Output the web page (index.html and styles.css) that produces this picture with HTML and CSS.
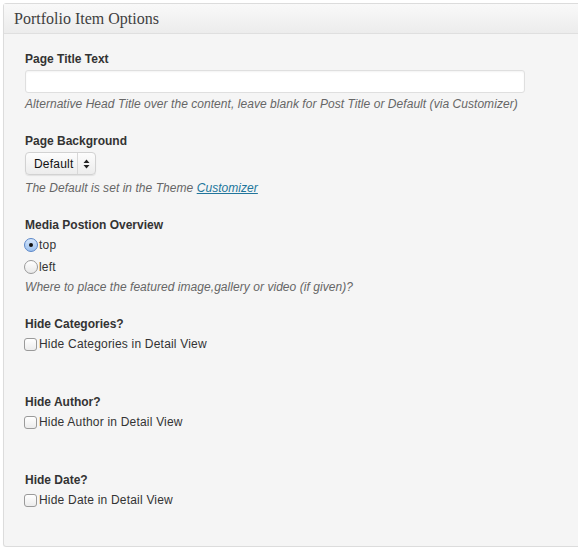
FILE: index.html
```html
<!DOCTYPE html>
<html>
<head>
<meta charset="utf-8">
<link rel="stylesheet" href="styles.css">
</head>
<body>
<div class="panel">
  <div class="panel-head"><h3 class="panel-title">Portfolio Item Options</h3></div>
  <div class="panel-body">
    <div class="field">
      <div class="label">Page Title Text</div>
      <input class="text-input" type="text">
      <p class="desc desc-input">Alternative Head Title over the content, leave blank for Post Title or Default (via Customizer)</p>
    </div>
    <div class="field">
      <div class="label">Page Background</div>
      <div class="select"><span class="select-value">Default</span><span class="select-arrows"><svg width="7" height="10" viewBox="0 0 7 10"><path d="M3.5 0.5 L6.5 4 L0.5 4 Z M3.5 9.5 L6.5 6 L0.5 6 Z" fill="#222"/></svg></span></div>
      <p class="desc desc-select">The Default is set in the Theme <a class="link" href="#">Customizer</a></p>
    </div>
    <div class="field">
      <div class="label label-opt">Media Postion Overview</div>
      <div class="opt"><span class="radio radio-on"><span class="dot"></span></span>top</div>
      <div class="opt"><span class="radio"></span>left</div>
      <p class="desc desc-opt">Where to place the featured image,gallery or video (if given)?</p>
    </div>
    <div class="field field-check">
      <div class="label label-opt">Hide Categories?</div>
      <div class="opt"><span class="check"></span>Hide Categories in Detail View</div>
    </div>
    <div class="field field-check">
      <div class="label label-opt">Hide Author?</div>
      <div class="opt"><span class="check"></span>Hide Author in Detail View</div>
    </div>
    <div class="field field-check last">
      <div class="label label-opt">Hide Date?</div>
      <div class="opt"><span class="check"></span>Hide Date in Detail View</div>
    </div>
  </div>
</div>
</body>
</html>
```
FILE: styles.css
```css
html, body { margin: 0; padding: 0; background: #fff; }
body { font-family: "Liberation Sans", Arial, sans-serif; font-size: 12px; color: #333; }
.panel {
  margin: 3px 0 0 3px;
  width: 590px;
  border: 1px solid #dcdcdc;
  border-radius: 3px;
  background: #f5f5f5;
  box-shadow: 0 1px 1px rgba(0,0,0,0.04);
}
.panel-head {
  height: 29px;
  border-bottom: 1px solid #dfdfdf;
  background: linear-gradient(#f9f9f9, #ececec);
  display: flex;
  align-items: center;
}
.panel-title {
  margin: 0 0 0 10px;
  font-family: "Liberation Serif", "Times New Roman", serif;
  font-weight: normal;
  font-size: 16px;
  color: #3f3f3f;
  line-height: 20px;
}
.panel-body { padding: 18px 0 17px 21px; }
.field { margin-bottom: 22px; }
.field.last { margin-bottom: 0; }
.field-check { padding-bottom: 18px; }
.label { font-weight: bold; line-height: 15px; color: #333; margin-bottom: 3px; }
.label-opt { margin-bottom: 1px; }
.text-input {
  display: block;
  box-sizing: border-box;
  width: 500px;
  height: 23px;
  margin: 0;
  border: 1px solid #dfdfdf;
  border-radius: 3px;
  background: #fff;
  box-shadow: inset 0 1px 2px rgba(0,0,0,0.05);
}
.desc {
  margin: 2px 0 0;
  font-style: italic;
  line-height: 15px;
  color: #666;
  letter-spacing: 0.05px;
}
.desc-input { margin-top: 4px; }
.desc-select { margin-top: 6px; }
.desc-opt { margin-top: 2px; }
.link { color: #21759b; text-decoration: underline; }
.select {
  display: flex;
  box-sizing: border-box;
  width: 71px;
  height: 23px;
  margin-top: 1px;
  border: 1px solid #d2d2d2;
  border-radius: 4px;
  background: linear-gradient(#fdfdfd, #ececec);
  box-shadow: 0 1px 1px rgba(0,0,0,0.08);
  align-items: center;
  color: #111;
}
.select-value { flex: 1; padding-left: 8px; font-size: 12px; letter-spacing: 0.2px; }
.select-arrows {
  width: 17px;
  height: 100%;
  border-left: 1px solid #d8d8d8;
  display: flex;
  align-items: center;
  justify-content: center;
}
.opt { display: flex; align-items: center; line-height: 22px; height: 22px; color: #333; letter-spacing: 0.2px; }
.radio {
  box-sizing: border-box;
  width: 14px; height: 14px;
  margin: 0 1px 0 -1px;
  border: 1px solid #9a9a9a;
  border-radius: 50%;
  background: linear-gradient(#fff, #e8e8e8);
  display: flex; align-items: center; justify-content: center;
}
.radio-on { border-color: #5a86c8; background: linear-gradient(#d5e6fb, #9cc1ef); }
.dot { width: 4px; height: 4px; border-radius: 50%; background: #111; }
.check {
  box-sizing: border-box;
  width: 13px; height: 13px;
  margin: 0 2px 0 -1px;
  border: 1px solid #9a9a9a;
  border-radius: 3px;
  background: linear-gradient(#fff, #ececec);
}
```
